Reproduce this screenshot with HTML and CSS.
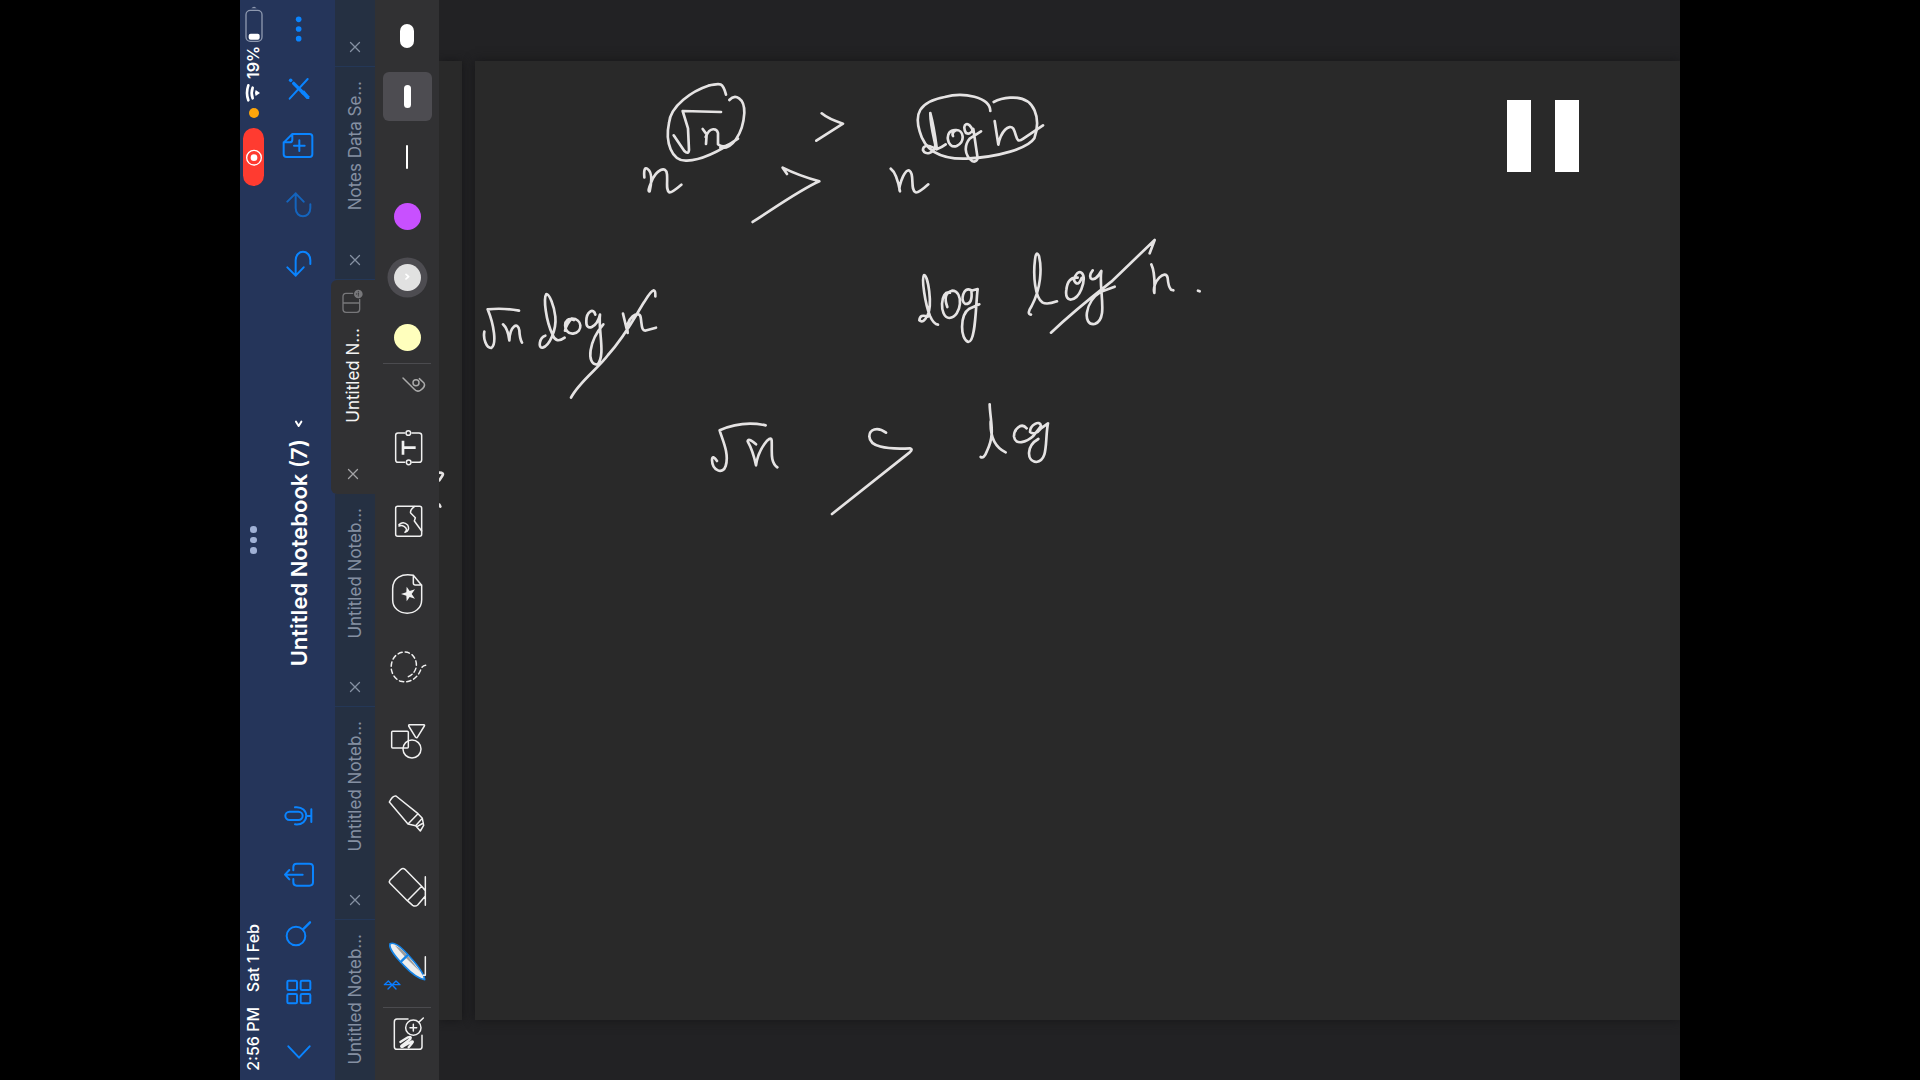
FILE: index.html
```html
<!DOCTYPE html>
<html lang="en">
<head>
<meta charset="utf-8">
<title>Untitled Notebook (7)</title>
<link rel="stylesheet" href="styles.css">
</head>
<body>
<main class="device">
  <aside class="status">
    <div class="status-end">
      <svg class="battery" viewBox="40 15 60 115"><rect class="battery-case" x="46" y="31" width="48" height="93" rx="13"/><rect class="fill" x="54" y="101" width="33" height="18" rx="6"/><path class="battery-cap" d="M62 25 Q70 16 78 25Z"/></svg>
      <span class="vertical percent">19%</span>
      <svg class="wifi" viewBox="45 250 50 60"><path d="M55 257Q47 280 55 302M68 264Q62 280 68 296"/><path class="fill" d="M77 271L90 280L77 289Q73 280 77 271Z"/></svg>
      <i class="mic-dot"></i>
      <span class="record"><svg viewBox="45 448 52 52"><circle cx="72" cy="474" r="22"/><circle class="fill" cx="72" cy="474" r="10"/></svg></span>
    </div>
    <div class="multitask"><i></i><i></i><i></i></div>
    <div class="status-start"><span class="vertical date">Sat 1 Feb</span><span class="vertical time">2:56 PM</span></div>
  </aside>

  <nav class="navbar">
    <div class="nav-group nav-top">
      <svg viewBox="156 42 100 90"><g class="fill"><circle cx="206" cy="58" r="8.5"/><circle cx="206" cy="87" r="8.5"/><circle cx="206" cy="116" r="8.5"/></g></svg>
      <svg viewBox="156 218 100 90"><path d="M179 295L233 236"/><path class="pencil" d="M191 249L220 278"/><path class="fill" d="M213 278L222 270L238 288V296H230Z"/><circle class="fill" cx="182" cy="240" r="5.5"/></svg>
      <svg viewBox="156 394 100 90"><path d="M187 403H239Q247 403 247 411V464Q247 472 239 472H170Q161 472 161 464V429ZM187 403V420Q187 428 179 428H161M208 422V454M192 438H224"/></svg>
      <svg class="dim" viewBox="156 570 100 90"><path d="M172 605L197 580L221 605M197 580V624C197 657 241 657 241 624V613"/></svg>
      <svg viewBox="156 746 100 90"><path d="M172 801L197 826L221 801M197 826V780C197 746 241 746 241 780V791"/></svg>
    </div>
    <div class="title"><svg class="caret" viewBox="190 470 34 34"><path d="M199 481L207 494L215 481"/></svg><span class="vertical">Untitled Notebook (7)</span></div>
    <div class="nav-group nav-bottom">
      <svg viewBox="156 33 100 90"><rect x="166" y="65" width="52" height="25" rx="12.5"/><path d="M195 52C240 47 240 108 195 103M229 78H244M244 58V96"/></svg>
      <svg viewBox="156 210 100 90"><path d="M190 241V231Q190 221 200 221H238Q249 221 249 231V277Q249 287 238 287H200Q190 287 190 277V267M166 254H218M178 240L165 254L178 268"/></svg>
      <svg viewBox="156 387 100 90"><circle cx="198" cy="438" r="28"/><path class="heavy" d="M219 418L240 397"/></svg>
      <svg viewBox="156 564 100 90"><rect x="172" y="572" width="29" height="28" rx="4"/><rect x="212" y="572" width="29" height="28" rx="4"/><rect x="172" y="612" width="29" height="28" rx="4"/><rect x="212" y="612" width="29" height="28" rx="4"/></svg>
      <svg viewBox="156 741 100 90"><path d="M175 769L207 803L239 769"/></svg>
    </div>
  </nav>

  <aside class="tabs">
    <div class="tab tab-cut"><svg class="close" viewBox="0 0 12 12"><path d="M1.5 1.5L10.5 10.5M10.5 1.5L1.5 10.5"/></svg></div>
    <div class="tab"><span class="vertical">Notes Data Se...</span><svg class="close" viewBox="0 0 12 12"><path d="M1.5 1.5L10.5 10.5M10.5 1.5L1.5 10.5"/></svg></div>
    <div class="tab active">
      <svg class="split" viewBox="335 85 70 80"><path d="M370 101H350Q341 101 341 111V149Q341 158 350 158H382Q391 158 391 149V119M341 130H391"/><circle cx="387" cy="103" r="13"/><path class="split-dots" d="M381 103H393M387 96V110"/></svg>
      <span class="vertical">Untitled N...</span><svg class="close" viewBox="0 0 12 12"><path d="M1.5 1.5L10.5 10.5M10.5 1.5L1.5 10.5"/></svg></div>
    <div class="tab"><span class="vertical">Untitled Noteb...</span><svg class="close" viewBox="0 0 12 12"><path d="M1.5 1.5L10.5 10.5M10.5 1.5L1.5 10.5"/></svg></div>
    <div class="tab"><span class="vertical">Untitled Noteb...</span><svg class="close" viewBox="0 0 12 12"><path d="M1.5 1.5L10.5 10.5M10.5 1.5L1.5 10.5"/></svg></div>
    <div class="tab"><span class="vertical">Untitled Noteb...</span></div>
  </aside>

  <aside class="toolbar">
    <div class="presets">
      <span class="slot"><i class="stroke thick"></i></span>
      <span class="slot selected"><i class="stroke medium"></i></span>
      <span class="slot"><i class="stroke thin"></i></span>
      <span class="swatch purple"></span>
      <span class="swatch white"><svg viewBox="520 38 26 28"><path d="M529 45L537 52L529 59"/></svg></span>
      <span class="swatch yellow"></span>
    </div>
    <hr>
    <div class="tools">
      <svg class="clip" viewBox="435 339 192 66"><path d="M519 354L553 388Q561 397 571 391Q588 380 582 369L568 356"/><circle cx="558" cy="368" r="9"/></svg>
      <svg viewBox="435 451 192 225"><path d="M524 520H504Q497 520 497 527V600Q497 608 504 608H524M546 520H567Q575 520 575 527V600Q575 608 567 608H546"/><circle cx="535" cy="520" r="7"/><circle cx="536" cy="608" r="7"/><path class="letter" d="M519 543V585M519 564H557"/></svg>
      <svg viewBox="435 676 192 225"><rect x="497" y="740" width="78" height="90" rx="6"/><path d="M553 741Q539 751 542 760L556 774L553 784L575 814M507 795Q520 783 533 796Q541 812 525 818Q535 808 522 800Q515 796 507 799"/></svg>
      <svg viewBox="435 121 192 225"><path d="M550 167C515 160 488 175 488 207V240C488 294 575 294 575 240V197L550 167V190Q550 196 556 196H575"/><path class="fill" d="M513 223L529 218L530 201L539 214L555 209L545 223L555 237L539 232L530 245L529 228Z"/></svg>
      <svg viewBox="435 346 192 225"><path class="dashed" d="M535 471C562 459 567 427 547 406C527 389 497 398 487 423C477 450 490 477 512 485C544 492 565 471 573 448Q577 438 587 437"/></svg>
      <svg viewBox="435 571 192 225"><rect x="485" y="635" width="50" height="50" rx="3"/><circle cx="546" cy="688" r="27"/><path d="M538 615H581Q585 616 583 619L562 653Q560 656 557 653L536 619Q535 616 538 615Z"/></svg>
      <svg viewBox="435 -14 192 225"><path d="M478 37Q488 17 498 19L564 72L534 103ZM534 103L557 108L577 86L564 72M557 108L571 124L581 107L577 86M561 111L580 100"/></svg>
      <svg viewBox="435 211 192 225"><path d="M480 271L513 239Q519 234 525 239L575 290L532 333L480 281Q476 276 480 271ZM532 333L548 347Q556 352 563 346L586 319V303L575 290M586 261V347"/></svg>
      <svg viewBox="435 436 192 225"><path class="pen-body" d="M480 462C497 455 520 480 540 502C563 527 582 552 584 570C568 568 543 550 522 528C500 505 475 478 480 462Z"/><path class="pen-shade" d="M494 467Q520 480 536 502L572 548L528 505Z"/><path class="pen-band" d="M513 516L532 497"/><path d="M586 501V557H579"/><path class="bluetooth" d="M463 585H510L498 574L474 598M510 585H463L475 574L498 598"/></svg>
    </div>
    <hr>
    <svg class="magnify" viewBox="435 655 192 156"><path d="M534 688H501Q493 688 493 697V771Q493 779 501 779H567Q576 779 576 771V737"/><circle cx="550" cy="714" r="23"/><path d="M566 698L580 685M550 704V724M540 714H560"/><path class="scribble" d="M511 757L534 743Q546 739 541 748L514 769Q512 774 520 770L544 756Q552 754 546 761L536 773"/></svg>
  </aside>

  <section class="canvas">
    <div class="page previous"></div>
    <div class="page current"></div>
    <svg class="ink" viewBox="439 0 1241 1080">
      <g transform="translate(230 260) scale(.33333)"><path d="M628 638Q643 638 637 647L628 661M628 734L631 740"/></g>
      <g transform="translate(620 60) scale(.33333)">
        <path d="M318 104C309 68 302 68 265 77C218 92 151 137 147 189C135 245 154 305 201 302C260 300 322 258 354 236M328 120C345 101 374 113 373 159C369 225 333 270 301 263"/>
        <path d="M161 226L193 273Q205 285 207 270L204 205L188 153L303 156M248 207L260 223L258 252M257 231C270 198 291 206 294 219V253Q306 264 324 255"/>
        <path d="M605 160Q625 177 669 191L589 242M501 342L488 323Q536 347 598 364C541 389 467 442 398 486M73 352Q70 317 83 327Q101 340 89 394Q81 396 94 366C108 329 139 315 141 343C143 370 137 390 148 397Q156 398 184 374"/>
        <path d="M1111 153C1110 111 1030 95 974 111C894 126 884 165 899 214C915 276 968 298 1039 296C1137 291 1224 265 1243 235C1262 180 1250 107 1170 113Q1142 115 1121 126"/>
        <path d="M931 159C930 190 942 235 946 255C942 282 915 286 909 271C908 255 925 255 938 262L950 268Q965 262 977 253M931 159C938 185 944 215 950 262M1008 210C970 207 980 269 1010 258C1038 244 1030 209 1008 210Q994 218 999 228M1060 216C1048 177 1022 192 1038 219Q1051 226 1060 207L1073 295Q1069 307 1058 304C1030 284 1034 254 1049 236L1083 214M1124 183L1135 254C1142 215 1167 190 1180 206C1192 228 1187 253 1210 236L1269 196"/>
        <path d="M812 326Q830 339 840 394C831 384 862 301 875 343C880 364 873 390 887 397Q895 400 925 373"/>
      </g>
      <g transform="translate(460 220) scale(.33333)">
        <path d="M73 335C69 356 79 385 94 384C111 372 102 315 83 268Q130 263 177 272M129 313Q144 327 148 361C150 318 174 304 178 331Q179 355 186 368"/>
        <path d="M256 347C238 352 233 386 248 383C268 378 290 330 286 290C282 255 268 222 259 222C250 235 257 300 278 345Q288 372 314 353M342 300C307 284 307 344 339 341C371 336 367 295 335 296Q319 313 315 332M406 284C401 262 379 275 379 303C377 337 411 323 420 284C414 331 438 406 412 434C377 433 387 362 430 313M489 281L503 339C495 293 538 267 542 292C546 314 543 336 560 331L588 323M333 533C356 487 416 444 444 405C497 346 526 288 552 247Q573 212 581 211Q587 212 586 229"/>
      </g>
      <g transform="translate(880 220) scale(.33333)">
        <path d="M174 314Q161 313 150 288C135 250 124 175 132 165C144 165 158 255 143 285Q130 312 118 301Q120 281 143 290M210 218C181 207 176 292 208 294C246 290 252 212 216 212Q187 221 202 261M272 210C250 198 239 245 256 252Q279 253 274 212L293 207C287 250 288 366 265 366C240 358 239 285 268 266L298 253"/>
        <path d="M453 284Q439 282 455 258C483 205 486 146 477 108Q468 90 465 119C459 167 465 232 487 247Q500 255 531 244M593 173Q563 170 559 210C553 252 589 245 604 208C627 150 588 141 582 181Q594 203 605 174M638 151C618 176 642 194 664 153C655 209 687 298 644 312C607 318 613 246 663 215L704 200M513 338C587 268 651 219 694 185L824 60L809 100M814 133Q826 158 823 219C814 186 858 144 863 174Q865 200 873 209L880 211M954 212L959 214"/>
      </g>
      <g transform="translate(680 380) scale(.33333)">
        <path d="M111 243Q97 223 96 240C97 273 129 284 137 258C149 220 125 175 119 151Q186 121 257 136M228 193Q203 172 203 184Q219 212 228 256C235 205 273 161 275 181C277 211 269 246 292 262M618 158C591 138 568 149 568 169C569 199 614 209 690 205Q700 207 689 217L456 402M929 73C930 122 947 160 921 213Q912 237 902 231M932 124C930 167 944 201 977 217M1040 145C1023 125 1001 150 1002 170C1006 198 1040 186 1060 168L1083 138C1080 118 1050 135 1050 156Q1065 168 1083 145L1104 130C1094 182 1106 242 1069 246C1037 242 1041 196 1075 177"/>
      </g>
    </svg>
    <div class="pause"><i></i><i></i></div>
  </section>
</main>
</body>
</html>
```
FILE: styles.css
```css
* { box-sizing: border-box; }
body { margin: 0; background: #000; font-family: Inter, "Liberation Sans", sans-serif; overflow: hidden; }
.device { width: 1440px; height: 1080px; margin: 0 auto; display: flex; overflow: hidden; background: #25355a; }
svg { display: block; flex: none; fill: none; stroke-linecap: round; stroke-linejoin: round; overflow: visible; }
svg .fill { fill: currentColor; stroke: none; }
hr { width: 48px; height: 1px; margin: 0; border: 0; background: #4b4b4f; flex: none; }
.vertical { writing-mode: vertical-rl; transform: rotate(180deg); white-space: nowrap; flex: none; }

/* Status rail */
.status { width: 27px; flex: none; display: flex; flex-direction: column; justify-content: space-between; align-items: center; color: #fff; padding: 5px 0 9px; font-size: 16px; line-height: 20px; font-weight: 500; }
.status .vertical { margin-right: 2px; }
.status-end, .status-start { height: 420px; display: flex; flex-direction: column; align-items: center; }
.status-start { justify-content: flex-end; gap: 15px; }
.battery { width: 20px; height: 38.33px; }
.battery-case { stroke: #8d98af; stroke-width: 4; }
.battery-cap { fill: #8d98af; }
.percent { margin-top: 2px; height: 34px; font-weight: 600; }
.wifi { width: 16.67px; height: 20px; margin-top: 4px; stroke: #fff; stroke-width: 8; }
.mic-dot { width: 10px; height: 10px; margin-top: 5px; border-radius: 50%; background: #ffa60a; }
.record { width: 21px; height: 58px; margin-top: 10px; border-radius: 11px; background: #ff3b30; display: grid; place-items: center; }
.record svg { width: 17.33px; height: 17.33px; stroke: #fff; stroke-width: 4; }
.multitask { display: flex; flex-direction: column; gap: 4px; padding-top: 4px; }
.multitask i { width: 6.6px; height: 6.6px; border-radius: 50%; background: #a0b1d5; }

/* Navigation rail */
.navbar { width: 68px; flex: none; display: flex; flex-direction: column; align-items: center; padding: 14px 5px 13px 0; color: #0a84ff; }
.nav-group { display: flex; flex-direction: column; }
.nav-group svg { width: 33.33px; height: 30px; stroke: currentColor; stroke-width: 6; }
.nav-top { gap: 28.67px; }
.nav-bottom { gap: 29px; margin-top: auto; }
.nav-top .dim { opacity: .6; }
.nav-group .pencil { stroke-width: 10; }
.nav-group .heavy { stroke-width: 7; }
.title { display: flex; flex-direction: column; align-items: center; gap: 10px; margin-top: 139px; color: #fff; font-size: 22px; line-height: 26px; font-weight: 600; }
.caret { width: 11.33px; height: 11.33px; stroke: currentColor; stroke-width: 6; }

/* Document tabs */
.tabs { width: 40px; flex: none; display: flex; flex-direction: column; align-items: flex-end; color: #8590a2; font-size: 17px; line-height: 22px; }
.tab { width: 40px; height: 213.33px; flex: none; display: flex; flex-direction: column; align-items: center; padding: 14px 0 13px; background: #253042; border-bottom: 1px solid #243757; }
.tab-cut { height: 67px; }
.close { width: 12px; height: 12px; margin-top: auto; stroke: currentColor; stroke-width: 1.3; }
.tab.active { width: 44px; padding: 8px 0 14px; background: #313133; color: #f4f4f4; border: 0; border-radius: 6px 0 0 6px; }
.tab.active .close { stroke: #a3a3a6; }
.split { width: 23.33px; height: 26.67px; margin-bottom: 13px; stroke: #77777a; stroke-width: 4; }
.split circle { fill: #77777a; stroke: none; }
.split-dots { stroke: #313133; stroke-width: 3; stroke-dasharray: 1 5; }

/* Drawing tools */
.toolbar { width: 64px; flex: none; display: flex; flex-direction: column; align-items: center; background: #313133; color: #f1f1f1; }
.presets { height: 363px; flex: none; display: flex; flex-direction: column; align-items: center; padding-top: 11px; }
.slot { width: 49px; height: 49.5px; flex: none; margin-bottom: 11px; border-radius: 6px; display: grid; place-items: center; }
.selected { background: #4d4c51; }
.stroke { height: 23.5px; border-radius: 8px; background: #fff; }
.thick { width: 14.5px; }
.medium { width: 7px; }
.thin { width: 2.4px; }
.swatch { width: 27px; height: 27px; border-radius: 50%; margin-bottom: 33.5px; display: grid; place-items: center; flex: none; }
.presets .purple { margin-top: 10.5px; background: #c850ff; }
.presets .yellow { margin-bottom: 0; background: #ffffbd; }
.white { background: #e1e1e1; box-shadow: 0 0 0 6.5px #4d4c51; }
.white svg { width: 8.67px; height: 9.33px; stroke: #fff; stroke-width: 5; }
.tools svg, .magnify { width: 64px; height: 75px; stroke: currentColor; stroke-width: 4.5; }
.tools { padding-top: 9px; height: 643px; flex: none; }
.tools .clip { height: 22px; stroke: #aaa; margin-bottom: 15.33px; }
.tools .letter { stroke-width: 8; stroke-linecap: butt; }
.tools .dashed { stroke-dasharray: 13 9; }
.tools .pen-body { fill: #eee; stroke: #1683e5; stroke-width: 5; }
.tools .pen-shade { fill: #9c9c9c; stroke: none; }
.tools .pen-band { stroke: #1683e5; stroke-width: 7; }
.tools .bluetooth { stroke: #0a7cff; stroke-width: 4; }
.toolbar .magnify { height: 52px; }
.magnify .scribble { stroke-width: 7; }

/* Notebook pages */
.canvas { position: relative; flex: 1; display: flex; gap: 13px; padding: 61px 0 60px; background: #222224; overflow: hidden; }
.page { background: #292929; box-shadow: 0 0 10px #161618; }
.previous { width: 23px; }
.current { flex: 1; }
.ink { position: absolute; inset: 0; width: 1241px; height: 1080px; stroke: #e5e3e3; stroke-width: 8; }
.pause { position: absolute; top: 100px; left: 1068px; display: flex; gap: 24px; }
.pause i { width: 24px; height: 72px; background: #fff; }
```
